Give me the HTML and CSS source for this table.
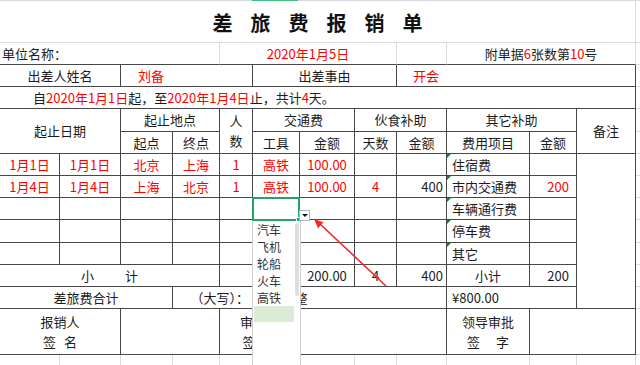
FILE: index.html
```html
<!DOCTYPE html>
<html lang="zh-CN">
<head>
<meta charset="utf-8">
<title>差旅费报销单</title>
<link rel="stylesheet" href="styles.css">
</head>
<body>
<div class="sheet">
  <div class="colhead"><span class="colhead-sel"></span></div>
  <table class="grid">
    <colgroup>
      <col class="w60"><col class="w61"><col class="w52"><col class="w47"><col class="w33"><col class="w47">
      <col class="w55"><col class="w42"><col class="w50"><col class="w83"><col class="w47"><col class="w59"><col class="w5">
    </colgroup>
    <tbody>
      <tr class="h42">
        <td colspan="12" class="lt title">差旅费报销单</td><td class="edge"></td>
      </tr>
      <tr class="h22">
        <td colspan="4" class="lr left pl2">单位名称：</td>
        <td colspan="4" class="lr red">2020年1月5日</td>
        <td class="lr"></td>
        <td colspan="3" class="lr">附单据<span class="red">6</span>张数第<span class="red">10</span>号</td>
        <td class="edge"></td>
      </tr>
      <tr class="h22">
        <td colspan="2">出差人姓名</td>
        <td colspan="3" class="left red pl17">刘备</td>
        <td colspan="3">出差事由</td>
        <td colspan="4" class="left red pl16">开会</td>
        <td class="edge"></td>
      </tr>
      <tr class="h22">
        <td colspan="12" class="left pl33">自<span class="red">2020年1月1日</span>起，至<span class="red">2020年1月4日</span>止，共计<span class="red">4</span>天。</td>
        <td class="edge"></td>
      </tr>
      <tr class="h23">
        <td colspan="2" rowspan="2">起止日期</td>
        <td colspan="2">起止地点</td>
        <td rowspan="2" class="lh20">人<br>数</td>
        <td colspan="2">交通费</td>
        <td colspan="2">伙食补助</td>
        <td colspan="2">其它补助</td>
        <td rowspan="2">备注</td>
        <td class="edge"></td>
      </tr>
      <tr class="h22">
        <td>起点</td><td>终点</td><td>工具</td><td>金额</td><td>天数</td><td>金额</td><td>费用项目</td><td>金额</td>
        <td class="edge"></td>
      </tr>
      <tr class="h22">
        <td class="red">1月1日</td><td class="red">1月1日</td><td class="red">北京</td><td class="red">上海</td>
        <td class="red">1</td><td class="red">高铁</td><td class="red">100.00</td><td></td><td></td>
        <td class="left pl5 tri">住宿费</td><td></td>
        <td rowspan="7"></td>
        <td class="edge"></td>
      </tr>
      <tr class="h22">
        <td class="red">1月4日</td><td class="red">1月4日</td><td class="red">上海</td><td class="red">北京</td>
        <td class="red">1</td><td class="red">高铁</td><td class="red">100.00</td><td class="red">4</td><td class="right pr3">400</td>
        <td class="left pl5 tri">市内交通费</td><td class="red right pr7">200</td>
        <td class="edge"></td>
      </tr>
      <tr class="h22">
        <td></td><td></td><td></td><td></td><td></td><td></td><td></td><td></td><td></td>
        <td class="left pl5 tri">车辆通行费</td><td></td>
        <td class="edge"></td>
      </tr>
      <tr class="h23">
        <td></td><td></td><td></td><td></td><td></td><td></td><td></td><td></td><td></td>
        <td class="left pl5 tri">停车费</td><td></td>
        <td class="edge"></td>
      </tr>
      <tr class="h22">
        <td></td><td></td><td></td><td></td><td></td><td></td><td></td><td></td><td></td>
        <td class="left pl5 tri">其它</td><td></td>
        <td class="edge"></td>
      </tr>
      <tr class="h22">
        <td colspan="4">小<span class="gap31"></span>计</td>
        <td></td><td></td><td>200.00</td><td>4</td><td class="right pr3">400</td>
        <td>小计</td><td class="right pr7">200</td>
        <td class="edge"></td>
      </tr>
      <tr class="h22">
        <td colspan="3">差旅费合计</td>
        <td colspan="6" class="left pl24 halt">（大写）：<span class="cn-amount">捌佰元</span>整</td>
        <td colspan="2" class="left pl5">¥800.00</td>
        <td class="edge"></td>
      </tr>
      <tr class="h46">
        <td colspan="2" class="lh20">报销人<br>签<span class="gap8"></span>名</td>
        <td colspan="2"></td>
        <td colspan="2" class="lh20">审核人<br>签<span class="gap8"></span>字</td>
        <td colspan="3"></td>
        <td class="lh20">领导审批<br>签<span class="gap16"></span>字</td>
        <td colspan="2"></td>
        <td class="edge"></td>
      </tr>
      <tr class="h22">
        <td class="lt"></td><td class="lt"></td><td class="lt"></td><td class="lt"></td><td class="lt"></td><td class="lt"></td>
        <td class="lt"></td><td class="lt"></td><td class="lt"></td><td class="lt"></td><td class="lt"></td><td class="lt"></td>
        <td class="edge"></td>
      </tr>
    </tbody>
  </table>

  <div class="selection"><span class="fill-handle"></span></div>
  <div class="dd-button"><span class="dd-caret"></span></div>
  <div class="dropdown">
    <div class="dd-item">汽车</div>
    <div class="dd-item">飞机</div>
    <div class="dd-item">轮船</div>
    <div class="dd-item">火车</div>
    <div class="dd-item">高铁</div>
    <div class="dd-item dd-active"></div>
    <span class="dd-thumb"></span>
  </div>

  <svg class="callout" width="640" height="365" viewBox="0 0 640 365">
    <line x1="386" y1="286" x2="319" y2="223" stroke="#f02a2a" stroke-width="1.6"/>
    <polygon points="314,219 323.5,222.2 318,228.2" fill="#f02a2a"/>
  </svg>
</div>
</body>
</html>
```

FILE: styles.css
```css
* { box-sizing: border-box; }
html, body { margin: 0; padding: 0; }
body {
  width: 640px;
  height: 365px;
  overflow: hidden;
  background: #fff;
  font-family: "Noto Sans CJK SC", "Microsoft YaHei", sans-serif;
  font-size: 13px;
  color: #1c1c1c;
}
.sheet { position: relative; width: 640px; height: 365px; overflow: hidden; }

.colhead { display: flex; height: 1px; background: #d5d8dd; }
.colhead-sel { margin-left: 252px; width: 46px; background: #3fbf7f; }

.grid { table-layout: fixed; width: 641px; border-collapse: separate; border-spacing: 0; }
.w60 { width: 60px; } .w61 { width: 61px; } .w52 { width: 52px; } .w47 { width: 47px; }
.w33 { width: 33px; } .w55 { width: 55px; } .w42 { width: 42px; } .w50 { width: 50px; }
.w83 { width: 83px; } .w59 { width: 59px; } .w5 { width: 5px; }

.h42 { height: 42px; } .h22 { height: 22px; } .h23 { height: 23px; } .h46 { height: 46px; }

.grid td {
  padding: 0;
  border-right: 1px solid #474747;
  border-bottom: 1px solid #474747;
  text-align: center;
  vertical-align: middle;
  line-height: 18px;
  white-space: nowrap;
  overflow: hidden;
}
.grid td.lt { border-right-color: #d9dbe0; border-bottom-color: #d9dbe0; }
.grid td.lr { border-right-color: #d9dbe0; }
.grid td.edge { border-right: none; border-bottom-color: #d9dbe0; }

.title {
  font-size: 20px;
  font-weight: 700;
  letter-spacing: 18px;
  padding-left: 18px !important;
  padding-top: 2px !important;
  color: #111;
}

.red { color: #ff0000; }
.grid td.left { text-align: left; }
.grid td.right { text-align: right; }
.grid td.pl2 { padding-left: 2px; }
.grid td.pl5 { padding-left: 5px; }
.grid td.pl16 { padding-left: 16px; }
.grid td.pl17 { padding-left: 17px; }
.grid td.pl24 { padding-left: 24px; }
.grid td.pl33 { padding-left: 33px; }
.grid td.pr3 { padding-right: 3px; }
.grid td.pr7 { padding-right: 7px; }
.grid td.lh20 { line-height: 20px; }
.halt { font-feature-settings: "halt" 1; }
.cn-amount { margin-left: 13px; }

.gap8, .gap16, .gap31 { display: inline-block; }
.gap8 { width: 8px; } .gap16 { width: 16px; } .gap31 { width: 31px; }

.grid td.tri { position: relative; }
.grid td.tri::before {
  content: "";
  position: absolute;
  left: 0;
  top: 0;
  border-top: 4px solid #1e7a3c;
  border-right: 4px solid transparent;
}

.selection {
  position: absolute;
  left: 252px;
  top: 197px;
  width: 48px;
  height: 24px;
  border: 2px solid #21a366;
}
.fill-handle {
  position: absolute;
  right: -3px;
  bottom: -3px;
  width: 5px;
  height: 5px;
  background: #21a366;
  border: 1px solid #fff;
}

.dd-button {
  position: absolute;
  left: 299px;
  top: 210px;
  width: 11px;
  height: 11px;
  background: #fff;
  border: 1px solid #a9b6c6;
  display: flex;
  align-items: center;
  justify-content: center;
}
.dd-caret {
  width: 0;
  height: 0;
  border-left: 3px solid transparent;
  border-right: 3px solid transparent;
  border-top: 3px solid #111;
}

.dropdown {
  position: absolute;
  left: 252px;
  top: 221px;
  width: 49px;
  height: 150px;
  background: #fff;
  border-left: 1px solid #cfcfcf;
  border-right: 1px solid #cfcfcf;
  font-size: 12px;
}
.dd-item {
  height: 17px;
  line-height: 17px;
  padding-left: 4px;
  color: #333;
}
.dd-active {
  margin-left: 1px;
  width: 40px;
  height: 16px;
  background: #dcebd5;
}
.dd-thumb {
  position: absolute;
  right: 1px;
  top: 2px;
  width: 4px;
  height: 73px;
  border-radius: 2px;
  background: #dedede;
}

.callout { position: absolute; left: 0; top: 0; pointer-events: none; }
```
